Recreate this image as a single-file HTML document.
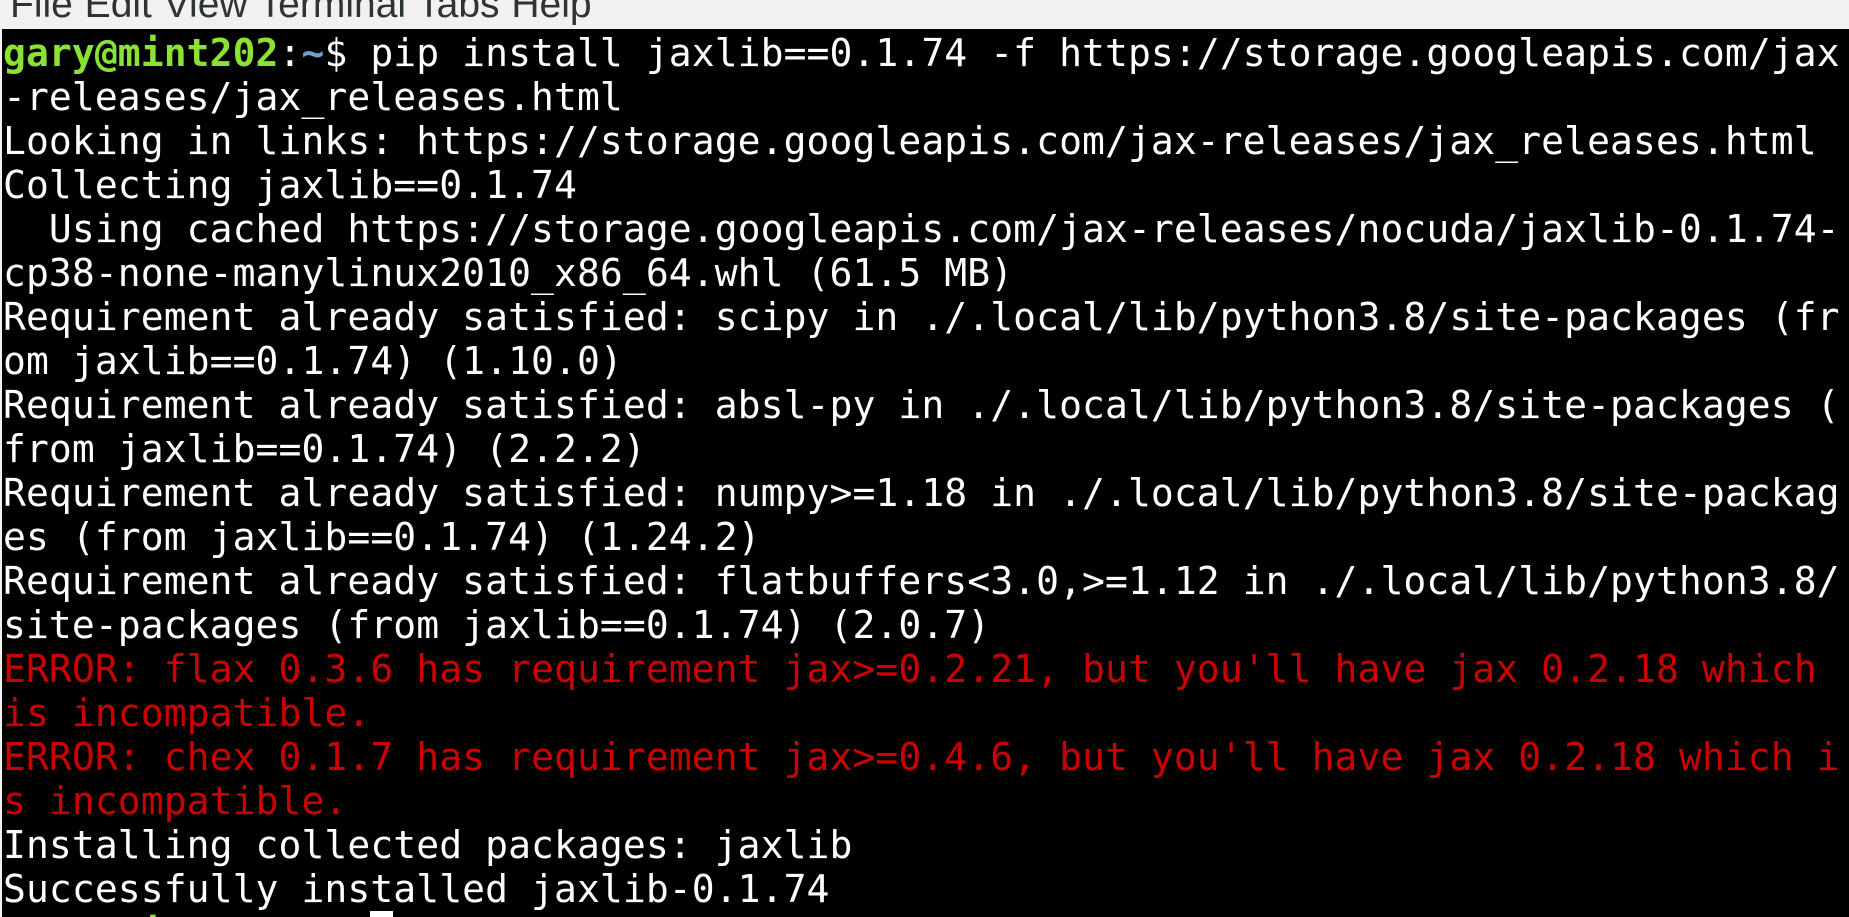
<!DOCTYPE html>
<html><head><style>
html,body{margin:0;padding:0;width:1849px;height:917px;overflow:hidden;background:#f2f1f0}
#menu{position:absolute;left:0;top:0;width:1849px;height:29px;background:#f2f1f0;overflow:hidden}
#menu span{position:absolute;left:10px;top:-17px;font:39px "Liberation Sans",sans-serif;color:#2e3436;word-spacing:1px}
#term{position:absolute;left:2px;top:29px;width:1847px;height:888px;background:#000;overflow:hidden}
pre{margin:0;position:absolute;left:1px;top:2px;font:38px/44px "DejaVu Sans Mono",monospace;letter-spacing:0.08px;color:#fff;white-space:pre}
.g{color:#8ae234;font-weight:bold}.b{color:#729fcf;font-weight:bold}.r{color:#cc0000}
.c{background:#fff}
</style></head><body>
<div id="menu"><span>File Edit View Terminal Tabs Help</span></div>
<div id="term"><pre><span class="g">gary@mint202</span>:<span class="b">~</span>$ pip install jaxlib==0.1.74 -f https://storage.googleapis.com/jax
-releases/jax_releases.html
Looking in links: https://storage.googleapis.com/jax-releases/jax_releases.html
Collecting jaxlib==0.1.74
  Using cached https://storage.googleapis.com/jax-releases/nocuda/jaxlib-0.1.74-
cp38-none-manylinux2010_x86_64.whl (61.5 MB)
Requirement already satisfied: scipy in ./.local/lib/python3.8/site-packages (fr
om jaxlib==0.1.74) (1.10.0)
Requirement already satisfied: absl-py in ./.local/lib/python3.8/site-packages (
from jaxlib==0.1.74) (2.2.2)
Requirement already satisfied: numpy>=1.18 in ./.local/lib/python3.8/site-packag
es (from jaxlib==0.1.74) (1.24.2)
Requirement already satisfied: flatbuffers&lt;3.0,>=1.12 in ./.local/lib/python3.8/
site-packages (from jaxlib==0.1.74) (2.0.7)
<span class="r">ERROR: flax 0.3.6 has requirement jax>=0.2.21, but you'll have jax 0.2.18 which 
is incompatible.
ERROR: chex 0.1.7 has requirement jax>=0.4.6, but you'll have jax 0.2.18 which i
s incompatible.</span>
Installing collected packages: jaxlib
Successfully installed jaxlib-0.1.74
<span class="g">gary@mint202</span>:<span class="b">~</span>$ <span class="c"> </span></pre></div>
</body></html>
